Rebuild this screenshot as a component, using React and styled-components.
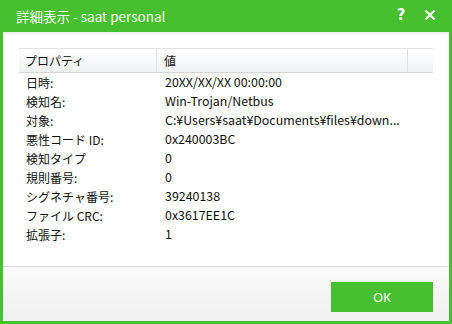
import React from "react";
import styled, { createGlobalStyle } from "styled-components";

const Global = createGlobalStyle`
  html, body { margin: 0; padding: 0; }
  body { font-family: "Noto Sans CJK JP", "Noto Sans", sans-serif; }
`;

const GREEN = "#46c02e";

const Window = styled.div`
  width: 452px;
  height: 324px;
  box-sizing: border-box;
  background: ${GREEN};
  padding: 0 3px 3px 3px;
  display: flex;
  flex-direction: column;
`;

const TitleBar = styled.div`
  height: 32px;
  display: flex;
  align-items: center;
  padding: 0 12px 0 13px;
  color: #fff;
`;

const Title = styled.div`
  flex: 1;
  font-size: 13.5px;
  line-height: 1;
  padding-top: 2px;
  font-family: "Noto Sans CJK JP", sans-serif;
`;

const TitleButton = styled.div`
  width: ${(p) => p.w}px;
  display: flex;
  justify-content: center;
  align-items: center;
  margin-left: ${(p) => p.ml || 0}px;
  font-family: "DejaVu Sans", sans-serif;
  font-weight: bold;
  font-size: 15px;
  line-height: 1;
  padding-bottom: 2px;
`;

const Body = styled.div`
  flex: 1;
  background: #fff;
  display: flex;
  flex-direction: column;
  box-shadow: inset 0 4px 4px -3px rgba(0, 0, 0, 0.12);
`;

const Content = styled.div`
  flex: 1;
  padding: 16px 16px 0 16px;
`;

const Table = styled.div`
  width: 414px;
  font-size: 12px;
  color: #111;
`;

const HeaderRow = styled.div`
  display: grid;
  grid-template-columns: 138px 251px 1fr;
  height: 25px;
  border-top: 1px solid #e5e5e5;
  border-bottom: 1px solid #d5d5d5;
  background: linear-gradient(#ffffff, #f1f2f4);
  box-sizing: border-box;
`;

const HeaderCell = styled.div`
  display: flex;
  align-items: center;
  padding-left: ${(p) => p.pl}px;
  border-right: ${(p) => (p.last ? "none" : "1px solid #e3e3e3")};
`;

const Row = styled.div`
  display: grid;
  grid-template-columns: 139px 1fr;
  height: 19px;
  align-items: center;
  padding-left: 7px;
`;

const Cell = styled.div`
  white-space: nowrap;
  overflow: hidden;
  line-height: 19px;
  font-size: ${(p) => (p.value ? "12.4px" : "12px")};
`;

const Footer = styled.div`
  height: 55px;
  border-top: 1px solid #dcdcdc;
  background: linear-gradient(#fafafa, #f0f0f0);
  display: flex;
  justify-content: flex-end;
  align-items: flex-start;
  padding: 15px 16px 0 0;
  box-sizing: border-box;
`;

const OkButton = styled.button`
  width: 102px;
  height: 30px;
  border: none;
  background: ${GREEN};
  color: #fff;
  font-family: "Noto Sans", sans-serif;
  font-size: 13px;
  padding: 0;
`;

const rows = [
  ["日時:", "20XX/XX/XX 00:00:00"],
  ["検知名:", "Win-Trojan/Netbus"],
  ["対象:", "C:¥Users¥saat¥Documents¥files¥down..."],
  ["悪性コード ID:", "0x240003BC"],
  ["検知タイプ", "0"],
  ["規則番号:", "0"],
  ["シグネチャ番号:", "39240138"],
  ["ファイル CRC:", "0x3617EE1C"],
  ["拡張子:", "1"],
];

export default function App() {
  return (
    <>
      <Global />
      <Window>
        <TitleBar>
          <Title>詳細表示 - saat personal</Title>
          <TitleButton w={12}>?</TitleButton>
          <TitleButton w={14} ml={16}>
            <svg width="12" height="12" viewBox="0 0 12 12">
              <path d="M1.5 1.5 L10.5 10.5 M10.5 1.5 L1.5 10.5" stroke="#fff" strokeWidth="2.2" />
            </svg>
          </TitleButton>
        </TitleBar>
        <Body>
          <Content>
            <Table>
              <HeaderRow>
                <HeaderCell pl={6}>プロパティ</HeaderCell>
                <HeaderCell pl={7}>値</HeaderCell>
                <HeaderCell last />
              </HeaderRow>
              {rows.map(([k, v]) => (
                <Row key={k}>
                  <Cell>{k}</Cell>
                  <Cell value>{v}</Cell>
                </Row>
              ))}
            </Table>
          </Content>
          <Footer>
            <OkButton>OK</OkButton>
          </Footer>
        </Body>
      </Window>
    </>
  );
}
